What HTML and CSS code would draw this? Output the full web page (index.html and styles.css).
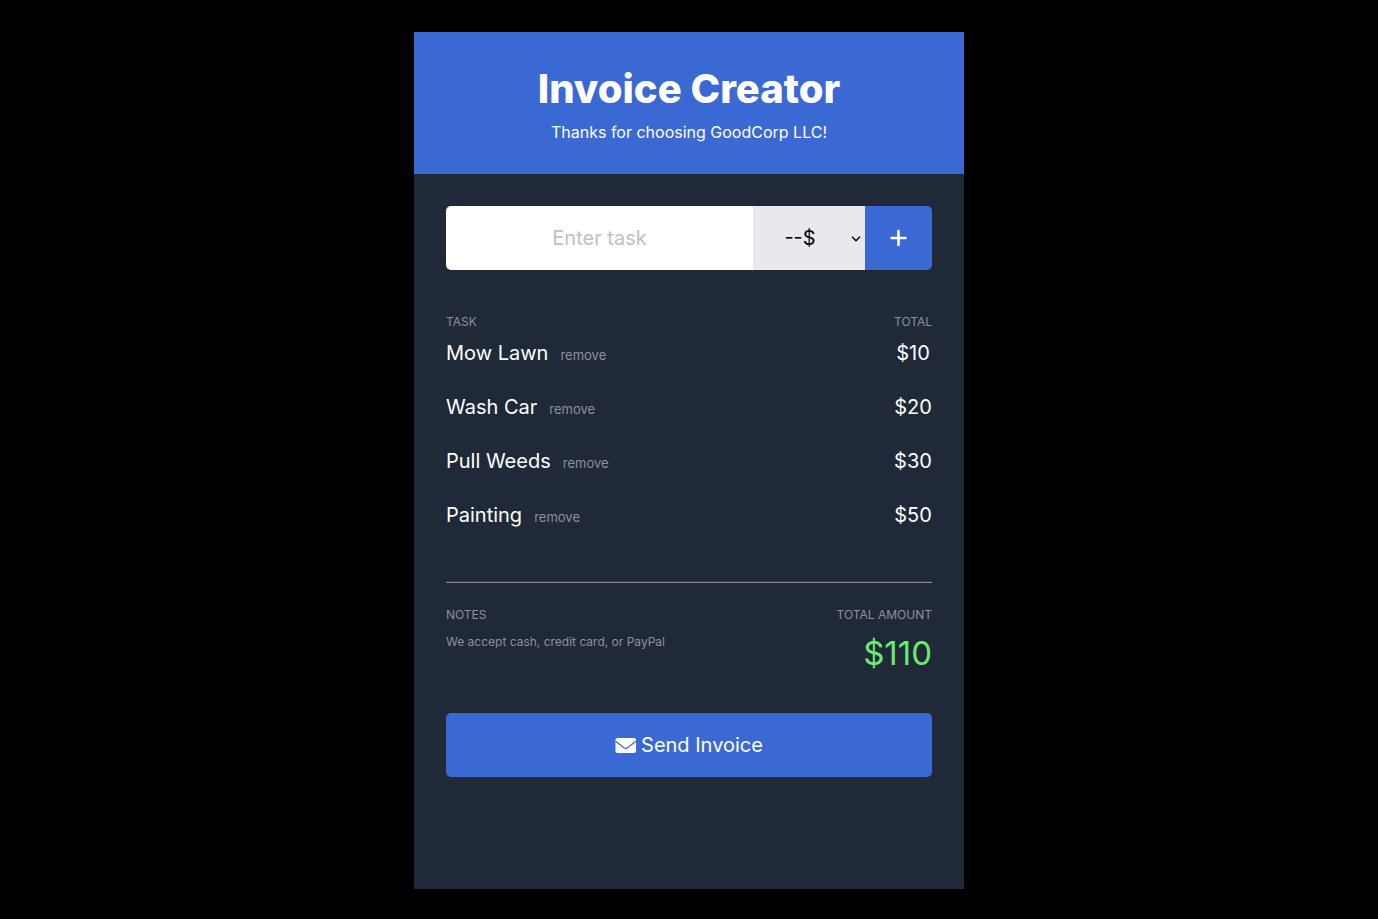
FILE: index.html
```html
<!DOCTYPE html>
<html lang="en">
<head>
<meta charset="utf-8">
<meta name="viewport" content="width=device-width, initial-scale=1">
<title>Invoice Creator</title>
<link rel="stylesheet" href="styles.css">
</head>
<body>
<main class="invoice">
  <header class="header">
    <h1 class="title">Invoice Creator</h1>
    <p class="tagline">Thanks for choosing GoodCorp LLC!</p>
  </header>
  <div class="content">
    <form class="task-form">
      <input class="task-input" type="text" placeholder="Enter task" aria-label="Task">
      <div class="price-field">
        <select class="price-select" aria-label="Price">
          <option>--$</option>
          <option>$10</option>
          <option>$20</option>
          <option>$30</option>
        </select>
        <svg class="chevron" viewBox="0 0 10 6" aria-hidden="true"><path d="M1 .7L5 4.700L9 .7"/></svg>
      </div>
      <button class="add-btn" type="button" aria-label="Add task">
        <svg class="plus-icon" viewBox="0 0 18 18" aria-hidden="true"><path d="M8.500 2v14M1.500 9h14"/></svg>
      </button>
    </form>
    <table class="tasks">
      <thead><tr><th class="label">TASK</th><th class="label total">TOTAL</th></tr></thead>
      <tbody>
        <tr><td>Mow Lawn<button class="remove" type="button">remove</button></td><td class="total">$10</td></tr>
        <tr><td>Wash Car<button class="remove" type="button">remove</button></td><td class="total">$20</td></tr>
        <tr><td>Pull Weeds<button class="remove" type="button">remove</button></td><td class="total">$30</td></tr>
        <tr><td>Painting<button class="remove" type="button">remove</button></td><td class="total">$50</td></tr>
      </tbody>
    </table>
    <section class="summary">
      <div class="notes">
        <h2 class="label">NOTES</h2>
        <p class="note-text">We accept cash, credit card, or PayPal</p>
      </div>
      <div class="amount">
        <h2 class="label">TOTAL AMOUNT</h2>
        <p class="sum">$110</p>
      </div>
    </section>
    <button class="send-btn" type="button">
      <svg class="mail-icon" viewBox="0 0 21 17" aria-hidden="true"><rect x=".5" y="1" width="20.500" height="15" rx="1.800"/><path class="flap" d="M.5 4.300L9.300 10.900Q10.700 11.900 12.100 10.900L21 4.300"/></svg>
      Send Invoice
    </button>
  </div>
</main>
</body>
</html>
```
FILE: styles.css
```css
* { box-sizing: border-box; }

body {
  margin: 0;
  padding: 32px 16px 30px;
  min-height: 100vh;
  display: flex;
  justify-content: center;
  background: #000;
  color: #fff;
  font-family: Inter, "Liberation Sans", sans-serif;
}

h1, h2, p { margin: 0; }
button, input, select { font: inherit; border: 0; margin: 0; }

.invoice {
  width: 100%;
  max-width: 550px;
  background: #1f2937;
}

.header {
  padding: 32px;
  background: #3b69d3;
  text-align: center;
}

.title { font-size: 40px; line-height: 50px; font-weight: 800; }
.tagline { margin-top: 8px; font-size: 16px; line-height: 20px; }
.content { padding: 32px; }

.task-form { display: flex; height: 64px; }

.task-input {
  flex: 1;
  min-width: 0;
  padding: 0 16px;
  border-radius: 5px 0 0 5px;
  background: #fff;
  color: #000;
  font-size: 20px;
  text-align: center;
}
.task-input::placeholder { color: #c0c0c8; opacity: 1; }

.price-field { position: relative; display: flex; width: 112px; }
.price-select {
  appearance: none;
  width: 100%;
  padding: 0 18px 0 0;
  border-radius: 0;
  background: #e8e8ed;
  color: #000;
  font-size: 20px;
  text-align: center;
}
.chevron {
  position: absolute;
  right: 4px;
  top: 30px;
  width: 10px;
  height: 6px;
  fill: none;
  stroke: #000;
  stroke-width: 1.500;
  pointer-events: none;
}

.add-btn {
  display: flex;
  align-items: center;
  justify-content: center;
  width: 67px;
  padding: 0;
  border-radius: 0 5px 5px 0;
  background: #3b69d3;
  color: #fff;
}
.plus-icon {
  width: 18px;
  height: 18px;
  fill: none;
  stroke: currentColor;
  stroke-width: 2.600;
  stroke-linecap: round;
}

.label {
  color: #918e9b;
  font-size: 12px;
  line-height: 16px;
  font-weight: 400;
  text-align: left;
}

.tasks { width: 100%; margin-top: 44px; border-collapse: collapse; }
.tasks th, .tasks td { padding: 0; }
.tasks td { height: 54px; font-size: 20px; line-height: 24px; vertical-align: top; padding-top: 11px; }
.tasks .total { width: 1px; text-align: center; }

.remove {
  margin-left: 12px;
  padding: 0;
  background: none;
  color: #918e9b;
  font-size: 13px;
  line-height: 16px;
}

.summary {
  display: flex;
  justify-content: space-between;
  margin-top: 35px;
  padding-top: 24px;
  border-top: 2px groove #918c8a;
}
.note-text { margin-top: 11px; color: #918e9b; font-size: 12px; line-height: 16px; }
.amount { text-align: right; }
.amount .label { text-align: right; }
.sum { margin-top: 10px; color: #6bea6f; font-size: 33px; line-height: 40px; }

.send-btn {
  display: flex;
  align-items: center;
  justify-content: center;
  gap: 5px;
  width: 100%;
  height: 64px;
  margin-top: 40px;
  border-radius: 5px;
  background: #3b69d3;
  color: #fff;
  font-size: 20px;
}
.mail-icon { width: 21px; height: 17px; fill: currentColor; }
.flap { fill: none; stroke: #3b69d3; stroke-width: 1.200; }
```
